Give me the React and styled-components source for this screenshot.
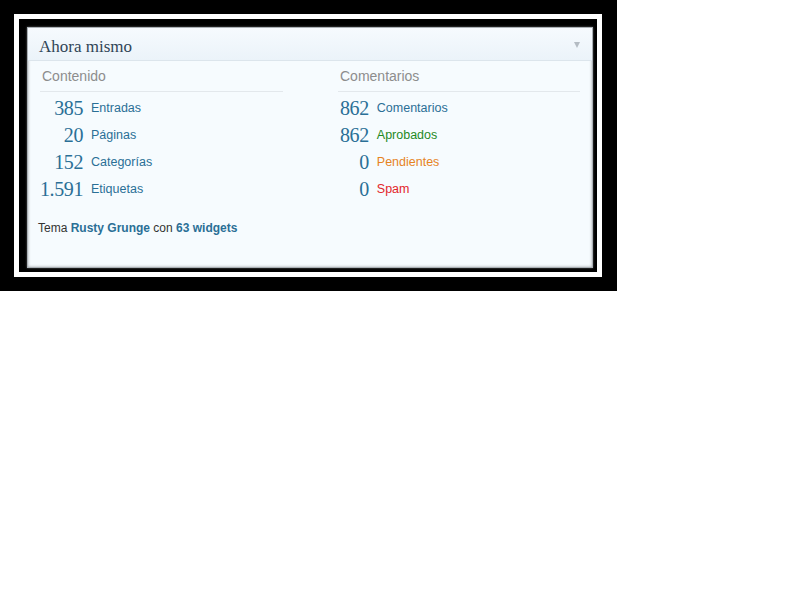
import React from "react";
import styled, { createGlobalStyle } from "styled-components";

const Global = createGlobalStyle`
  html, body { margin: 0; padding: 0; background: #fff; }
  body { font-family: "Liberation Sans", Arial, sans-serif; }
`;

const Outer = styled.div`
  display: inline-block;
  background: #000;
  padding: 14px 15px 14px 14px;
`;

const WhiteFrame = styled.div`
  border: 5px solid #fff;
  background: #000;
  padding: 8px 4px 4px 8px;
`;

const Panel = styled.div`
  width: 564px;
  height: 239px;
  border: 1px solid #aab0b5;
  background: #f6fbfe;
  box-shadow: inset 0 0 3px rgba(0, 0, 0, 0.35), 0 0 2px rgba(120, 120, 120, 0.8);
  display: flex;
  flex-direction: column;
`;

const Header = styled.div`
  display: flex;
  align-items: center;
  justify-content: space-between;
  height: 27px;
  padding: 5px 12px 0 11px;
  background: linear-gradient(#f6fafe, #ebf3f9);
  border-bottom: 1px solid #dce5ec;
`;

const Title = styled.h3`
  margin: 0;
  font-family: "Liberation Serif", Georgia, serif;
  font-weight: normal;
  font-size: 17px;
  line-height: 27px;
  color: #2f4456;
`;

const Arrow = styled.span`
  width: 0;
  height: 0;
  border-left: 3.5px solid transparent;
  border-right: 3.5px solid transparent;
  border-top: 6px solid #b4bcc3;
  margin-top: -3px;
`;

const Columns = styled.div`
  display: grid;
  grid-template-columns: 243px 242px;
  column-gap: 55px;
  padding: 0 12px;
`;

const Column = styled.div`
  display: flex;
  flex-direction: column;
`;

const ColumnTitle = styled.div`
  margin-top: 6px;
  padding: 0 0 6px 2px;
  font-size: 14px;
  line-height: 18px;
  color: #8d8d8d;
  border-bottom: 1px solid #e3e8ec;
`;

const Table = styled.div`
  margin-top: 3px;
  padding-left: ${(p) => p.$indent || 0}px;
  display: grid;
  grid-template-columns: auto 1fr;
  grid-auto-rows: 27px;
  column-gap: 8px;
  align-items: center;
`;

const Num = styled.span`
  text-align: right;
  font-family: "Liberation Serif", Georgia, serif;
  font-variant-numeric: oldstyle-nums;
  font-size: 20px;
  letter-spacing: -0.4px;
  line-height: 27px;
  color: #2a6f96;
`;

const Label = styled.a`
  font-size: 12.5px;
  line-height: 27px;
  color: ${(p) => p.$color || "#2a6f96"};
  text-decoration: none;
`;

const Footer = styled.p`
  margin: 16px 0 0 10px;
  font-size: 12px;
  line-height: 18px;
  color: #333;
`;

const Strong = styled.a`
  font-weight: bold;
  color: #2a6f96;
  text-decoration: none;
`;

const content = [
  ["385", "Entradas"],
  ["20", "Páginas"],
  ["152", "Categorías"],
  ["1.591", "Etiquetas"],
];

const comments = [
  ["862", "Comentarios", "#2a6f96"],
  ["862", "Aprobados", "#1f8a1f"],
  ["0", "Pendientes", "#e6841e"],
  ["0", "Spam", "#e3262b"],
];

export default function App() {
  return (
    <>
      <Global />
      <Outer>
        <WhiteFrame>
          <Panel>
            <Header>
              <Title>Ahora mismo</Title>
              <Arrow />
            </Header>
            <Columns>
              <Column>
                <ColumnTitle>Contenido</ColumnTitle>
                <Table>
                  {content.map(([n, l]) => (
                    <React.Fragment key={l}>
                      <Num>{n}</Num>
                      <Label>{l}</Label>
                    </React.Fragment>
                  ))}
                </Table>
              </Column>
              <Column>
                <ColumnTitle>Comentarios</ColumnTitle>
                <Table $indent={2}>
                  {comments.map(([n, l, c]) => (
                    <React.Fragment key={l}>
                      <Num>{n}</Num>
                      <Label $color={c}>{l}</Label>
                    </React.Fragment>
                  ))}
                </Table>
              </Column>
            </Columns>
            <Footer>
              Tema <Strong>Rusty Grunge</Strong> con <Strong>63 widgets</Strong>
            </Footer>
          </Panel>
        </WhiteFrame>
      </Outer>
    </>
  );
}
